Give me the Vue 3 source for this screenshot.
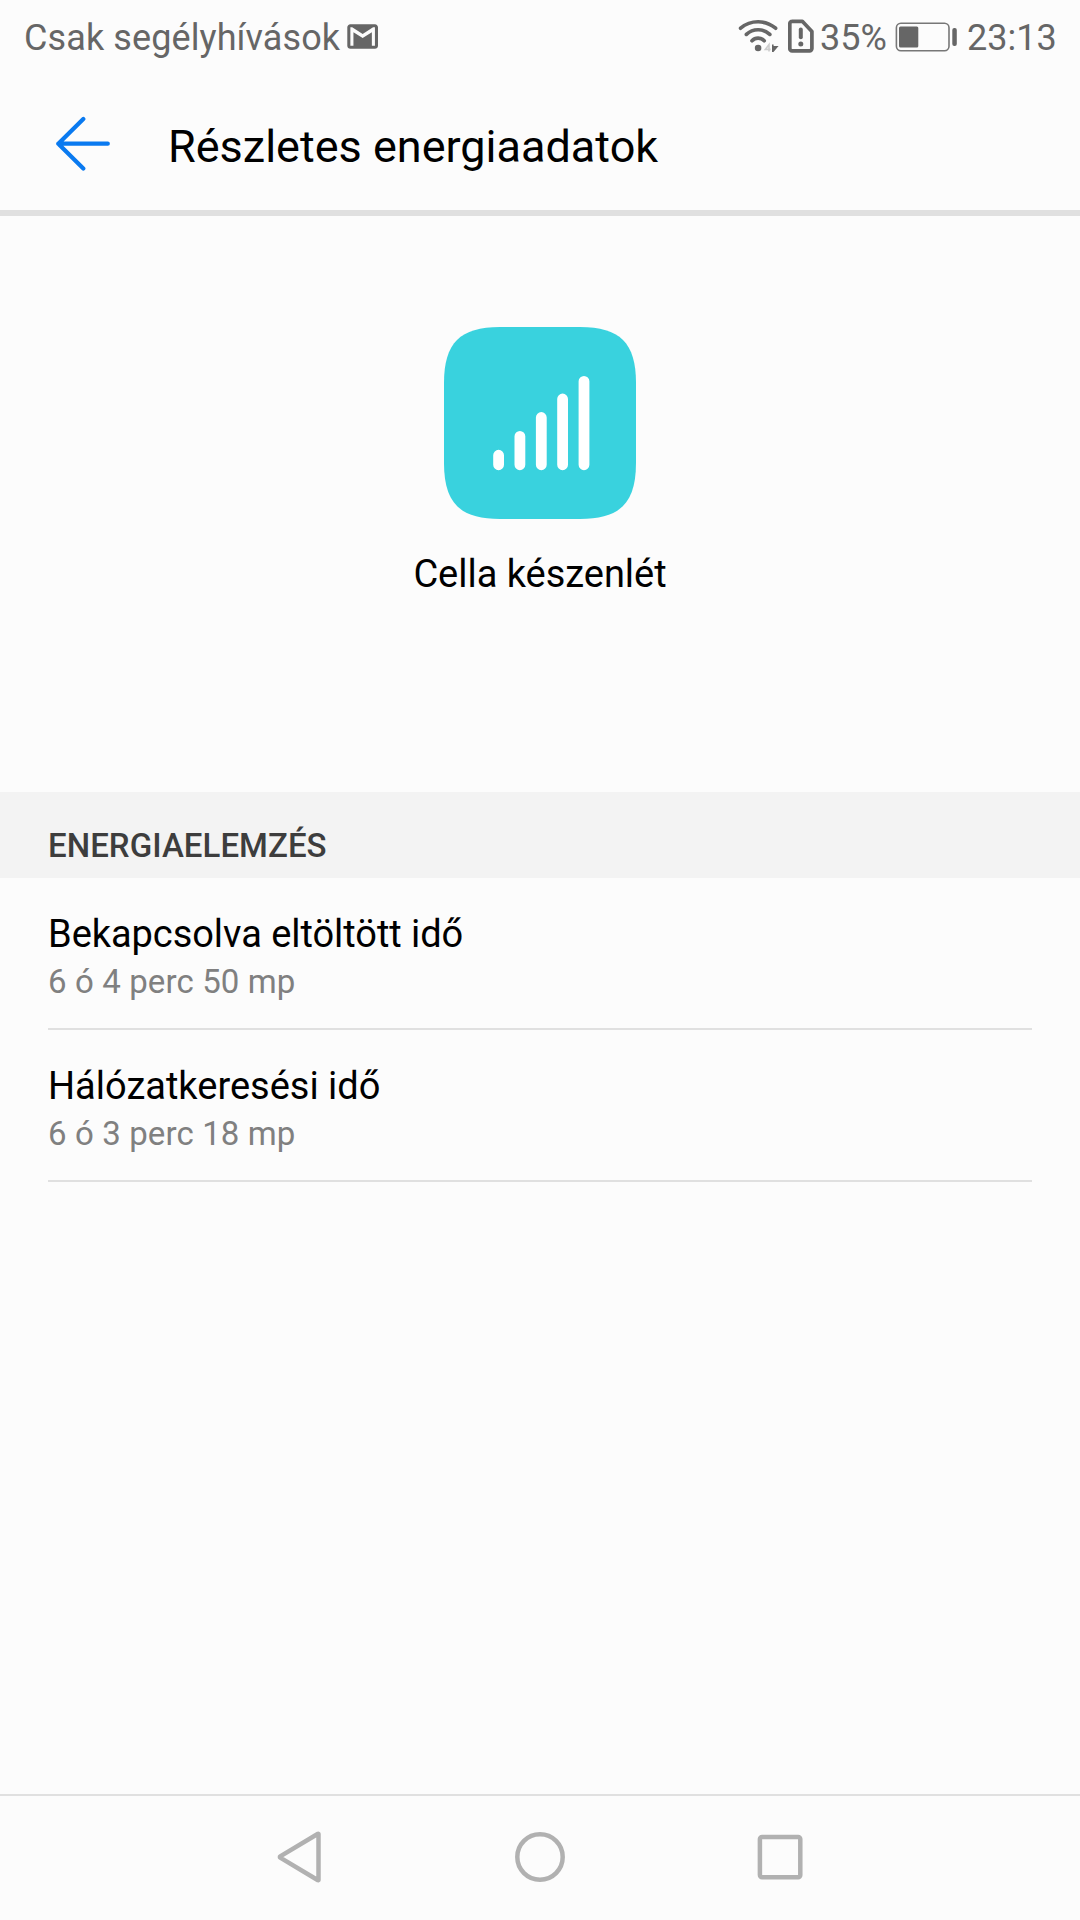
<script setup>
const stats = [
  { title: 'Bekapcsolva eltöltött idő', value: '6 ó 4 perc 50 mp' },
  { title: 'Hálózatkeresési idő', value: '6 ó 3 perc 18 mp' }
]
</script>

<template>
  <div class="screen">
    <div class="status">
      <span class="carrier">Csak segélyhívások</span>
      <svg class="mail" width="32" height="26" viewBox="0 0 32 26">
        <path transform="translate(-2.77 -5.85) scale(1.535)" fill="#666" d="M20 4H4c-1.1 0-2 .9-2 2v12c0 1.1.9 2 2 2h16c1.1 0 2-.9 2-2V6c0-1.1-.9-2-2-2zm0 14h-2V9.25L12 13 6 9.25V18H4V6h1.2l6.8 4.25L18.8 6H20v12z" />
      </svg>
      <span class="grow"></span>
      <svg class="wifi" width="42" height="36" viewBox="738 18 42 36" fill="none" stroke="#666" stroke-width="3.7" stroke-linecap="round">
        <path d="M740.6 28.2A27 27 0 0 1 775.6 28.2" />
        <path d="M746.4 34.4A17 17 0 0 1 769.8 34.4" />
        <path d="M752 40.7A8.4 8.4 0 0 1 764.2 40.7" />
        <circle cx="758.1" cy="48" r="3.3" fill="#666" stroke="none" />
        <path d="M769 51.5V44.6L765.3 49.4H770.6" stroke="#ccc" stroke-width="1.6" stroke-linecap="butt" />
        <path d="M772 44.5h1.6v7.5H772zM773.3 46H778.6L773.3 52.2z" fill="#666" stroke="none" />
      </svg>
      <svg class="sim" width="26" height="34" viewBox="788 18.5 26 34">
        <path d="M792 20.8H802.3L811.9 31V48a2.3 2.3 0 0 1-2.3 2.3H792.1a2.3 2.3 0 0 1-2.3-2.3V23.1a2.3 2.3 0 0 1 2.3-2.3z" fill="none" stroke="#666" stroke-width="3.7" stroke-linejoin="round" />
        <path d="M800.8 29V36.8" stroke="#666" stroke-width="4" stroke-linecap="round" />
        <circle cx="800.8" cy="43.6" r="2.5" fill="#666" />
      </svg>
      <span class="percent">35%</span>
      <svg class="battery" width="62" height="30" viewBox="895 21.5 62 30">
        <rect x="896.4" y="22.8" width="52.6" height="27.4" rx="4.5" fill="none" stroke="#777" stroke-width="1.6" />
        <rect x="899" y="26" width="19.3" height="21" rx="1.5" fill="#666" />
        <rect x="952.3" y="27.5" width="4.5" height="18" rx="2" fill="#666" />
      </svg>
      <span class="clock">23:13</span>
    </div>

    <header class="bar">
      <svg width="56" height="56" viewBox="0 0 56 56" fill="none" stroke="#0a7af0" stroke-width="4.2" stroke-linecap="round" stroke-linejoin="round">
        <path d="M28.3 2.9L3.3 27.7L28.3 52.5M3.3 27.7H52.8" />
      </svg>
      <h1>Részletes energiaadatok</h1>
    </header>

    <section class="hero">
      <svg width="192" height="192" viewBox="0 0 192 192">
        <path fill="#39d2de" d="M56 0H136C176 0 192 16 192 56V136C192 176 176 192 136 192H56C16 192 0 176 0 136V56C0 16 16 0 56 0Z" />
        <g stroke="#fff" stroke-width="10.8" stroke-linecap="round">
          <path d="M54.6 128.2V137.8M75.9 109.3V137.8M97.3 90.5V137.8M118.6 72V137.8M140 54.3V137.8" />
        </g>
      </svg>
      <p>Cella készenlét</p>
    </section>

    <h2 class="section">ENERGIAELEMZÉS</h2>
    <ul class="list">
      <li v-for="s in stats" :key="s.title">
        <span class="title">{{ s.title }}</span>
        <span class="value">{{ s.value }}</span>
      </li>
    </ul>

    <nav class="nav">
      <svg width="50" height="54" viewBox="-2 0 50 54">
        <path d="M41.5 4V50a.3.3 0 0 1-.5.2L3.2 27.6a.7.7 0 0 1 0-1.2L41 3.8a.3.3 0 0 1 .5.2z" fill="none" stroke="#b1b1b1" stroke-width="4.5" stroke-linejoin="round" />
      </svg>
      <svg width="50" height="54" viewBox="0 0 50 54">
        <circle cx="25" cy="27" r="22.7" fill="none" stroke="#b1b1b1" stroke-width="4.5" />
      </svg>
      <svg width="50" height="54" viewBox="0 0 50 54">
        <rect x="4.9" y="6.9" width="40.4" height="40.4" rx="2.2" fill="none" stroke="#b1b1b1" stroke-width="4.5" />
      </svg>
    </nav>
  </div>
</template>

<style>
body {
  background: #fcfcfc;
}
</style>

<style scoped>
.screen {
  display: flex;
  flex-direction: column;
  width: 1080px;
  height: 1920px;
  overflow: hidden;
  background: #fcfcfc;
  color: #000;
  font-family: Roboto, "Noto Sans", sans-serif;
}
h1, h2, p, ul {
  margin: 0;
  padding: 0;
  font-weight: 400;
}
svg {
  display: block;
  flex: none;
}
.status {
  display: flex;
  align-items: center;
  box-sizing: border-box;
  height: 72px;
  padding: 0 24px;
  color: #666;
  font-size: 36px;
  line-height: 42px;
  white-space: nowrap;
}
.status span {
  padding-top: 3px;
}
.carrier {
  letter-spacing: 0.1px;
}
.mail {
  margin-left: 7px;
  margin-top: 2px;
}
.grow {
  flex: 1;
}
.wifi {
  margin-right: 8px;
}
.sim {
  margin-right: 6px;
}
.percent {
  width: 75px;
}
.battery {
  margin-right: 10px;
  margin-top: 1px;
}
.clock {
  width: 89px;
}
.bar {
  display: flex;
  align-items: center;
  box-sizing: border-box;
  height: 144px;
  padding-left: 55px;
  border-bottom: 6px solid #e0e0e0;
}
.bar svg {
  margin-top: 5px;
}
.bar h1 {
  margin-left: 57px;
  padding-top: 10px;
  font-size: 45px;
  line-height: 53px;
}
.hero {
  display: flex;
  flex-direction: column;
  align-items: center;
  box-sizing: border-box;
  height: 576px;
  padding-top: 111px;
}
.hero p {
  margin-top: 32px;
  font-size: 38px;
  line-height: 46px;
  letter-spacing: -0.03px;
}
.section {
  box-sizing: border-box;
  height: 86px;
  padding: 34px 48px 0;
  background: #f3f3f3;
  color: #3d3d3d;
  font-size: 33px;
  font-weight: 500;
  line-height: 40px;
  letter-spacing: 0.05px;
}
.list {
  list-style: none;
  padding: 0 48px;
}
.list li {
  display: flex;
  flex-direction: column;
  box-sizing: border-box;
  height: 152px;
  padding-top: 33px;
  border-bottom: 2px solid #e0e0e0;
}
.title {
  font-size: 38px;
  line-height: 46px;
}
.list li:first-child .title {
  letter-spacing: -0.05px;
}
.value {
  margin-top: 5px;
  color: #808080;
  font-size: 33px;
  line-height: 40px;
  letter-spacing: 0.12px;
}
.nav {
  display: flex;
  justify-content: center;
  align-items: center;
  gap: 190px;
  box-sizing: border-box;
  height: 126px;
  margin-top: auto;
  padding-bottom: 2px;
  border-top: 2px solid #e0e0e0;
}
</style>
